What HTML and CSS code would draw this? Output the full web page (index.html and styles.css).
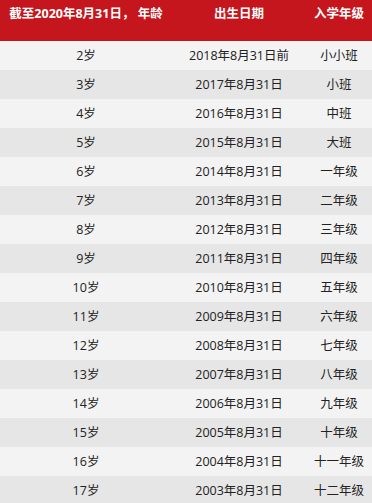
FILE: index.html
```html
<!DOCTYPE html>
<html lang="zh-CN">
  <head>
    <meta charset="UTF-8" />
    <meta name="viewport" content="width=device-width, initial-scale=1.0" />
    <title>入学年龄对照表</title>
    <link rel="stylesheet" href="styles.css">
  </head>
  <body>
    <table class="age-table">
      <thead>
        <tr>
          <th class="col-age">截至2020年8月31日， 年龄</th>
          <th class="col-date">出生日期</th>
          <th class="col-grade">入学年级</th>
        </tr>
      </thead>
      <tbody>
        <tr><td>2岁</td><td>2018年8月31日前</td><td>小小班</td></tr>
        <tr><td>3岁</td><td>2017年8月31日</td><td>小班</td></tr>
        <tr><td>4岁</td><td>2016年8月31日</td><td>中班</td></tr>
        <tr><td>5岁</td><td>2015年8月31日</td><td>大班</td></tr>
        <tr><td>6岁</td><td>2014年8月31日</td><td>一年级</td></tr>
        <tr><td>7岁</td><td>2013年8月31日</td><td>二年级</td></tr>
        <tr><td>8岁</td><td>2012年8月31日</td><td>三年级</td></tr>
        <tr><td>9岁</td><td>2011年8月31日</td><td>四年级</td></tr>
        <tr><td>10岁</td><td>2010年8月31日</td><td>五年级</td></tr>
        <tr><td>11岁</td><td>2009年8月31日</td><td>六年级</td></tr>
        <tr><td>12岁</td><td>2008年8月31日</td><td>七年级</td></tr>
        <tr><td>13岁</td><td>2007年8月31日</td><td>八年级</td></tr>
        <tr><td>14岁</td><td>2006年8月31日</td><td>九年级</td></tr>
        <tr><td>15岁</td><td>2005年8月31日</td><td>十年级</td></tr>
        <tr><td>16岁</td><td>2004年8月31日</td><td>十一年级</td></tr>
        <tr><td>17岁</td><td>2003年8月31日</td><td>十二年级</td></tr>
      </tbody>
    </table>
  </body>
</html>
```

FILE: styles.css
```css
body {
  font-family: "Open Sans", "Noto Sans CJK SC", sans-serif;
  margin: 0;
  padding: 0;
  background-color: #fff;
  color: #222;
}
.age-table {
  width: 372px;
  border-collapse: collapse;
  table-layout: fixed;
  font-size: 12.5px;
}
.age-table th {
  height: 41px;
  padding: 4px 0 0;
  vertical-align: top;
  background-color: #c4161c;
  color: #fff;
  font-weight: bold;
  line-height: 19px;
  white-space: nowrap;
  box-sizing: border-box;
}
.col-age {
  width: 172px;
}
.col-date {
  width: 134px;
}
.col-grade {
  width: 66px;
}
.age-table td {
  height: 29px;
  padding: 0;
  text-align: center;
  line-height: 29px;
  box-sizing: border-box;
}
.age-table tbody tr:nth-child(odd) {
  background-color: #f3f3f3;
}
.age-table tbody tr:nth-child(even) {
  background-color: #e6e6e6;
}
```
